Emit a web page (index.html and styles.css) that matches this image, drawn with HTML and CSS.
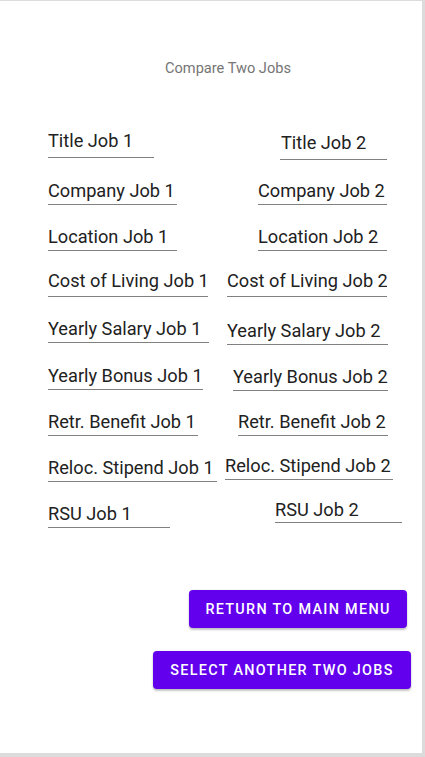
FILE: index.html
```html
<!DOCTYPE html>
<html lang="en">
<head>
<meta charset="utf-8">
<title>Compare Two Jobs</title>
<link rel="stylesheet" href="styles.css">
</head>
<body>
<div class="screen">
  <h1 class="heading">Compare Two Jobs</h1>
  <div class="form">
    <div class="row">
      <div class="field l-title">Title Job 1</div>
      <div class="field r-title">Title Job 2</div>
    </div>
    <div class="row row-plus">
      <div class="field l-company">Company Job 1</div>
      <div class="field r-company">Company Job 2</div>
    </div>
    <div class="row">
      <div class="field l-location">Location Job 1</div>
      <div class="field r-location">Location Job 2</div>
    </div>
    <div class="row">
      <div class="field l-cost">Cost of Living Job 1</div>
      <div class="field r-cost">Cost of Living Job 2</div>
    </div>
    <div class="row">
      <div class="field l-salary">Yearly Salary Job 1</div>
      <div class="field r-salary">Yearly Salary Job 2</div>
    </div>
    <div class="row row-plus">
      <div class="field l-bonus">Yearly Bonus Job 1</div>
      <div class="field r-bonus">Yearly Bonus Job 2</div>
    </div>
    <div class="row">
      <div class="field l-retr">Retr. Benefit Job 1</div>
      <div class="field r-retr">Retr. Benefit Job 2</div>
    </div>
    <div class="row">
      <div class="field l-reloc">Reloc. Stipend Job 1</div>
      <div class="field r-reloc">Reloc. Stipend Job 2</div>
    </div>
    <div class="row">
      <div class="field l-rsu">RSU Job 1</div>
      <div class="field r-rsu">RSU Job 2</div>
    </div>
  </div>
  <div class="actions">
    <button class="btn btn-return">Return to main menu</button>
    <button class="btn btn-select">Select another two jobs</button>
  </div>
</div>
</body>
</html>
```
FILE: styles.css
```css
html, body {
  margin: 0;
  padding: 0;
}
body {
  background: #dcdcdc;
  width: 425px;
  height: 757px;
  overflow: hidden;
  font-family: Roboto, "Noto Sans", sans-serif;
}
.screen {
  box-sizing: border-box;
  width: 422px;
  height: 752px;
  margin-top: 1px;
  background: #ffffff;
  padding-top: 59px;
}
.heading {
  margin: 0 0 0 34px;
  font-size: 14.6px;
  font-weight: 400;
  line-height: 17px;
  color: #757575;
  text-align: center;
}
.form {
  margin-top: 53px;
  display: flex;
  flex-direction: column;
  gap: 18px;
}
.row {
  display: flex;
  align-items: flex-start;
  padding-left: 48px;
}
.row-plus {
  margin-top: 1px;
}
.field {
  box-sizing: border-box;
  height: 28px;
  font-size: 18.2px;
  line-height: 22px;
  color: #212121;
  white-space: nowrap;
  overflow: hidden;
  padding-top: 3px;
  padding-bottom: 2px;
  border-bottom: 1px solid #808080;
}
.l-title { width: 106px; padding-top: 0; padding-bottom: 5px; }
.l-company { width: 129px; }
.l-location { width: 129px; }
.l-cost { width: 160px; padding-top: 1px; padding-bottom: 4px; }
.l-salary { width: 161px; }
.l-bonus { width: 155px; }
.l-retr { width: 150px; }
.l-reloc { width: 169px; }
.l-rsu { width: 122px; }

.r-title { width: 107px; margin-left: auto; margin-right: 35px; margin-top: 2px; margin-bottom: -2px; padding-left: 1px; padding-top: 0; padding-bottom: 5px; }
.r-company { width: 129px; margin-left: auto; margin-right: 35px; }
.r-location { width: 129px; margin-left: auto; margin-right: 35px; }
.r-cost { width: 160px; margin-left: auto; margin-right: 35px; padding-top: 1px; padding-bottom: 4px; }
.r-salary { width: 161px; margin-left: auto; margin-right: 34px; margin-top: 2px; margin-bottom: -2px; }
.r-bonus { width: 155px; margin-left: auto; margin-right: 34px; margin-top: 1px; margin-bottom: -1px; }
.r-retr { width: 150px; margin-left: auto; margin-right: 34px; }
.r-reloc { width: 168px; margin-left: auto; margin-right: 29px; margin-top: -2px; }
.r-rsu { width: 127px; margin-left: auto; margin-right: 20px; margin-top: -5px; padding-top: 4px; padding-bottom: 1px; }

.actions {
  margin-top: 62px;
  display: flex;
  flex-direction: column;
  align-items: flex-end;
  gap: 23px;
}
.btn {
  box-sizing: border-box;
  height: 38px;
  border: none;
  border-radius: 4px;
  background: #6200ee;
  color: #ffffff;
  font-family: Roboto, "Noto Sans", sans-serif;
  font-size: 14.4px;
  font-weight: 500;
  letter-spacing: 1.3px;
  text-transform: uppercase;
  padding: 0 16px;
  box-shadow: 0 2px 2px rgba(0, 0, 0, 0.22), 0 0 2px rgba(0, 0, 0, 0.12);
}
.btn-return {
  width: 218px;
  margin-right: 15px;
}
.btn-select {
  width: 258px;
  margin-right: 11px;
}
```
